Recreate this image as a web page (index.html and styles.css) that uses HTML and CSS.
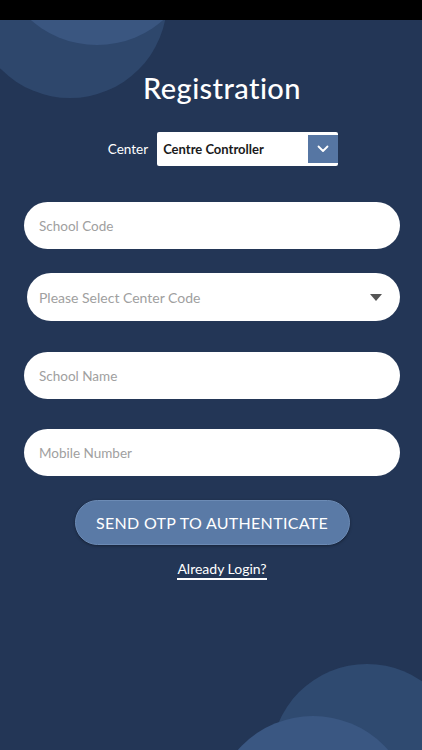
FILE: index.html
```html
<!DOCTYPE html>
<html lang="en">
    <head>
        <meta charset="utf-8" />
        <meta name="viewport" content="width=device-width, initial-scale=1" />
        <title>Registration</title>
        <link rel="stylesheet" href="styles.css">
    </head>
    <body>
        <div class="statusbar"></div>
        <main class="screen">
            <span class="blob blob-tl-outer"></span>
            <span class="blob blob-tl-inner"></span>
            <span class="blob blob-br-outer"></span>
            <span class="blob blob-br-inner"></span>

            <h1 class="title">Registration</h1>

            <div class="center-row">
                <span class="center-label">Center</span>
                <div class="center-select">
                    <span class="center-value">Centre Controller</span>
                    <span class="center-btn">
                        <svg width="12" height="8" viewBox="0 0 12 8"><path d="M1.5 1.5 6 6l4.5-4.5" fill="none" stroke="#fff" stroke-width="1.8" stroke-linecap="round" stroke-linejoin="round"/></svg>
                    </span>
                </div>
            </div>

            <form class="fields">
                <input class="pill" type="text" placeholder="School Code">
                <div class="pill pill-select">
                    <span>Please Select Center Code</span>
                    <svg width="12" height="7" viewBox="0 0 12 7"><path d="M0 0h12L6 7z" fill="#555"/></svg>
                </div>
                <input class="pill pill-name" type="text" placeholder="School Name">
                <input class="pill pill-mobile" type="text" placeholder="Mobile Number">
            </form>

            <button class="send" type="button">SEND OTP TO AUTHENTICATE</button>
            <a class="login" href="#">Already Login?</a>
        </main>
    </body>
</html>
```

FILE: styles.css
```css
* { margin: 0; padding: 0; box-sizing: border-box; }
body { font-family: "Lato", "Noto Sans", sans-serif; background: #233656; width: 422px; height: 750px; overflow: hidden; }

.statusbar { height: 20px; background: #000; position: relative; z-index: 2; }

.screen {
    position: relative;
    height: 730px;
    overflow: hidden;
    display: flex;
    flex-direction: column;
    align-items: center;
    }

.blob { position: absolute; border-radius: 50%; }
.blob-tl-outer { width: 194px; height: 194px; left: -27px; top: -116px; background: #2e476c; }
.blob-tl-inner { width: 200px; height: 200px; left: -3px; top: -175px; background: #3a5680; }
.blob-br-outer { width: 192px; height: 192px; left: 271px; top: 644px; background: #2f4a70; }
.blob-br-inner { width: 200px; height: 200px; left: 213px; top: 696px; background: #3a5782; }

.title {
    position: relative;
    margin: 51px 0 0 22px;
    font-size: 29px;
    font-weight: 500;
    line-height: 34px;
    color: #fff;
    letter-spacing: 0.4px;
    }

.center-row {
    position: relative;
    margin: 27px 0 0 24px;
    display: flex;
    align-items: center;
    gap: 9px;
    }
.center-label { color: #fff; font-size: 13.5px; }
.center-select {
    width: 181px;
    height: 34px;
    background: #fff;
    border-radius: 2px;
    display: flex;
    align-items: center;
    justify-content: space-between;
    padding: 3px 0 3px 6px;
    }
.center-value { font-size: 13px; font-weight: 700; color: #1a1a1a; }
.center-btn {
    width: 30px;
    height: 100%;
    background: #5676a3;
    display: flex;
    align-items: center;
    justify-content: center;
    }

.fields {
    position: relative;
    margin: 36px 0 0 2px;
    width: 376px;
    display: flex;
    flex-direction: column;
    }
.pill {
    height: 47px;
    border: none;
    border-radius: 24px;
    background: #fff;
    font-family: inherit;
    font-size: 13.5px;
    padding: 0 15px;
    color: #333;
    outline: none;
    }
.pill::placeholder { color: #a0a0a0; }
.pill-select {
    margin: 24px 0 0 3px;
    height: 48px;
    display: flex;
    align-items: center;
    justify-content: space-between;
    padding: 0 18px 0 12px;
    font-size: 14px;
    color: #a0a0a0;
    }
.pill-name { margin-top: 31px; }
.pill-mobile { margin-top: 30px; }

.send {
    position: relative;
    margin: 24px 0 0 2px;
    width: 275px;
    height: 45px;
    border: 1px solid #6c8bb5;
    border-radius: 23px;
    background: #5a7aa6;
    box-shadow: 0 1px 3px rgba(0,0,0,.35);
    color: #fff;
    font-family: inherit;
    font-size: 16px;
    letter-spacing: 0.3px;
    }

.login {
    position: relative;
    margin: 15px 0 0 22px;
    color: #fff;
    font-size: 14px;
    text-decoration: none;
    border-bottom: 2px solid #fff;
    padding-bottom: 1px;
    }
```
